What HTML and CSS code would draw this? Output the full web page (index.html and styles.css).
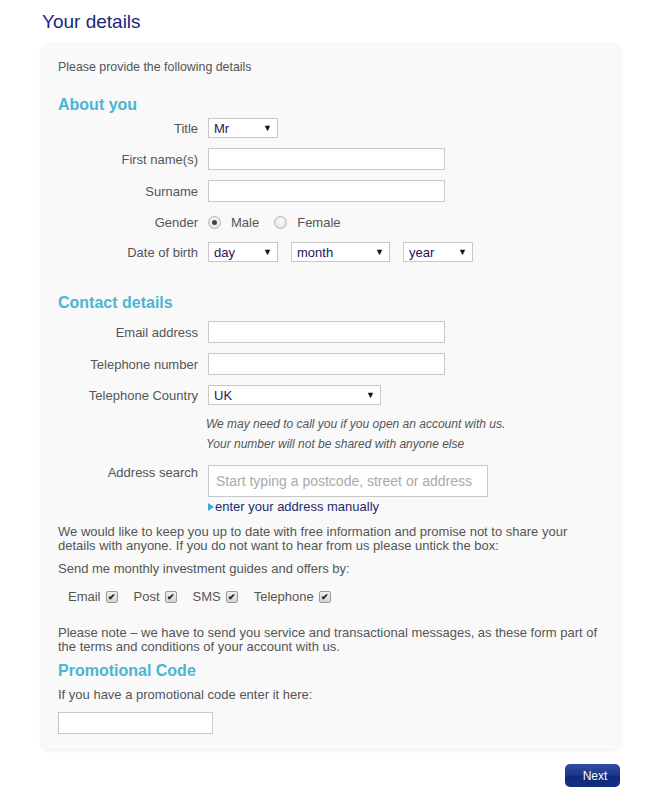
FILE: index.html
```html
<!DOCTYPE html>
<html>
<head>
<meta charset="utf-8">
<link rel="stylesheet" href="styles.css">
</head>
<body>
<div class="page">
  <h1 class="page-title">Your details</h1>
  <div class="card">
    <p class="intro">Please provide the following details</p>

    <h2 class="section-title first">About you</h2>
    <div class="form-grid">
      <div class="row">
        <label class="lbl">Title</label>
        <div class="select w-70"><span>Mr</span><span class="arrow">▼</span></div>
      </div>
      <div class="row">
        <label class="lbl">First name(s)</label>
        <input class="text-input" type="text">
      </div>
      <div class="row">
        <label class="lbl">Surname</label>
        <input class="text-input" type="text">
      </div>
      <div class="row row-20">
        <label class="lbl">Gender</label>
        <div class="radios">
          <span class="radio checked"></span><span class="radio-label">Male</span>
          <span class="radio"></span><span class="radio-label">Female</span>
        </div>
      </div>
      <div class="row">
        <label class="lbl">Date of birth</label>
        <div class="dob">
          <div class="select w-70"><span>day</span><span class="arrow">▼</span></div>
          <div class="select w-99"><span>month</span><span class="arrow">▼</span></div>
          <div class="select w-70"><span>year</span><span class="arrow">▼</span></div>
        </div>
      </div>
    </div>

    <h2 class="section-title contact">Contact details</h2>
    <div class="form-grid">
      <div class="row">
        <label class="lbl">Email address</label>
        <input class="text-input" type="text">
      </div>
      <div class="row">
        <label class="lbl">Telephone number</label>
        <input class="text-input" type="text">
      </div>
      <div class="row">
        <label class="lbl">Telephone Country</label>
        <div class="select w-173"><span>UK</span><span class="arrow">▼</span></div>
      </div>
    </div>
    <div class="notes">
      <p>We may need to call you if you open an account with us.</p>
      <p>Your number will not be shared with anyone else</p>
    </div>
    <div class="row address-row">
      <label class="lbl lbl-top">Address search</label>
      <div class="address-col">
        <input class="address-input" type="text" placeholder="Start typing a postcode, street or address">
        <a class="manual-link"><span class="tri"></span>enter your address manually</a>
      </div>
    </div>

    <p class="para keep">We would like to keep you up to date with free information and promise not to share your details with anyone. If you do not want to hear from us please untick the box:</p>
    <p class="para send">Send me monthly investment guides and offers by:</p>
    <div class="checks">
      <span class="check-item">Email <span class="checkbox">✔</span></span>
      <span class="check-item">Post <span class="checkbox">✔</span></span>
      <span class="check-item">SMS <span class="checkbox">✔</span></span>
      <span class="check-item">Telephone <span class="checkbox">✔</span></span>
    </div>
    <p class="para note">Please note – we have to send you service and transactional messages, as these form part of the terms and conditions of your account with us.</p>

    <h2 class="section-title promo">Promotional Code</h2>
    <p class="para promo-text">If you have a promotional code enter it here:</p>
    <input class="promo-input" type="text">
  </div>
  <div class="actions">
    <button class="next-btn">Next</button>
  </div>
</div>
</body>
</html>
```
FILE: styles.css
```css
* { box-sizing: border-box; }
html, body { margin: 0; padding: 0; background: #fff; }
body {
  font-family: "Liberation Sans", Arial, sans-serif;
  color: #555;
}
.page {
  width: 620px;
  padding-left: 42px;
  padding-top: 10px;
}
.page-title {
  margin: 0;
  font-size: 19px;
  line-height: 24px;
  font-weight: normal;
  color: #18287a;
}
.card {
  margin-top: 10px;
  background: #f9f9f9;
  border-radius: 8px;
  box-shadow: 0 1px 5px rgba(0,0,0,0.09);
  padding: 15px 16px 15px 16px;
  height: 705px;
}
.intro {
  margin: 0;
  font-size: 12.4px;
  line-height: 16px;
}
.section-title {
  margin: 0;
  font-size: 16px;
  line-height: 20px;
  font-weight: bold;
  color: #4ab5d3;
}
.section-title.first { margin-top: 20px; margin-bottom: 3px; }
.section-title.contact { margin-top: 31px; margin-bottom: 8px; }
.section-title.promo { margin-top: 7px; }

.form-grid {
  display: flex;
  flex-direction: column;
  gap: 10px;
}
.row {
  display: flex;
  align-items: center;
  gap: 10px;
}
.row-20 { height: 20px; }
.lbl {
  width: 140px;
  text-align: right;
  font-size: 13px;
  color: #555;
  flex-shrink: 0;
}
.text-input {
  width: 237px;
  height: 22px;
  border: 1px solid #c8c8c8;
  background: #fff;
  margin: 0;
  padding: 0 4px;
  font: inherit;
}
.select {
  height: 20px;
  border: 1px solid #c8c8c8;
  background: #fff;
  display: flex;
  align-items: center;
  justify-content: space-between;
  padding: 0 5px 0 5px;
  font-size: 13px;
  color: #2a1458;
}
.select .arrow {
  font-size: 9px;
  color: #111;
}
.w-70 { width: 70px; }
.w-99 { width: 99px; }
.w-173 { width: 173px; }
.dob {
  display: flex;
  gap: 13px;
}
.radios {
  display: flex;
  align-items: center;
  font-size: 13px;
}
.radio {
  width: 13px;
  height: 13px;
  border-radius: 50%;
  border: 1px solid #b5b5b5;
  background: radial-gradient(circle at 50% 40%, #fbfbfb, #dcdcdc);
  display: inline-flex;
  align-items: center;
  justify-content: center;
}
.radio.checked::after {
  content: "";
  width: 5px;
  height: 5px;
  border-radius: 50%;
  background: #444;
}
.radio-label { margin-left: 10px; margin-right: 15px; }

.notes {
  margin: 9px 0 0 148px;
}
.notes p {
  margin: 0;
  font-size: 12px;
  line-height: 20px;
  font-style: italic;
  color: #555;
}
.address-row {
  align-items: flex-start;
  margin-top: 11px;
}
.lbl-top { padding-top: 0; line-height: 15px; }
.address-col {
  display: flex;
  flex-direction: column;
}
.address-input {
  width: 280px;
  height: 32px;
  border: 1px solid #c8c8c8;
  background: #fff;
  margin: 0;
  padding: 0 7px;
  font-family: "Liberation Sans", Arial, sans-serif;
  font-size: 14px;
}
.address-input::placeholder { color: #aaa; }
.manual-link {
  margin-top: 2px;
  font-size: 13px;
  line-height: 16px;
  color: #1e2a6e;
  display: flex;
  align-items: center;
}
.tri {
  width: 0;
  height: 0;
  border-top: 4px solid transparent;
  border-bottom: 4px solid transparent;
  border-left: 6px solid #35acd6;
  margin-right: 1px;
}
.para {
  margin: 0;
  font-size: 13px;
  line-height: 14px;
  color: #555;
}
.keep { margin-top: 10px; }
.send { margin-top: 9px; }
.checks {
  margin-top: 14px;
  padding-left: 10px;
  display: flex;
  gap: 16px;
  font-size: 13px;
  line-height: 14px;
}
.check-item {
  display: inline-flex;
  align-items: center;
  gap: 5px;
}
.checkbox {
  width: 12px;
  height: 12px;
  border: 1px solid #9a9a9a;
  border-radius: 2px;
  background: linear-gradient(#f0f0f0, #d4d4d4);
  font-size: 9px;
  font-weight: bold;
  line-height: 10px;
  color: #222;
  display: inline-flex;
  align-items: center;
  justify-content: center;
}
.note { margin-top: 22px; }
.promo-text { margin-top: 7px; }
.promo-input {
  display: block;
  margin-top: 10px;
  width: 155px;
  height: 22px;
  border: 1px solid #c8c8c8;
  background: #fff;
  padding: 0 4px;
}
.actions {
  display: flex;
  justify-content: flex-end;
  margin-top: 15px;
}
.next-btn {
  width: 55px;
  height: 23px;
  border: none;
  border-radius: 5px;
  background: linear-gradient(#2f4ea3 0%, #1d3a8e 45%, #0f2a7c 55%, #13307f 100%);
  color: #fff;
  font-family: "Liberation Sans", Arial, sans-serif;
  font-size: 12px;
  padding: 0 0 0 5px;
}
```
